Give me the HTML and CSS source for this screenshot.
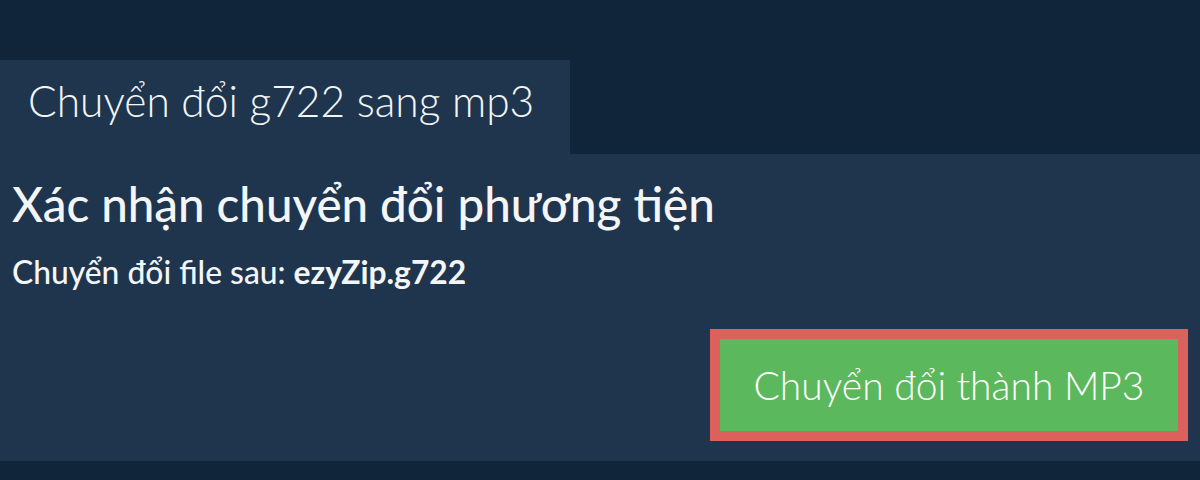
FILE: index.html
```html
<!DOCTYPE html>
<html lang="vi">
<head>
  <meta charset="UTF-8">
  <title>Chuyển đổi g722 sang mp3</title>
  <link rel="stylesheet" href="styles.css">
</head>
<body>
  <div class="page">
    <div class="tab">Chuyển đổi g722 sang mp3</div>
    <div class="panel">
      <h1 class="panel-title">Xác nhận chuyển đổi phương tiện</h1>
      <p class="file-line">Chuyển đổi file sau: <b>ezyZip.g722</b></p>
      <div class="actions">
        <button class="convert-btn">Chuyển đổi thành MP3</button>
      </div>
    </div>
  </div>
</body>
</html>
```

FILE: styles.css
```css
body {
  margin: 0;
  background: #10243a;
  color: #f3f5f7;
  font-family: 'Lato', 'Noto Sans', sans-serif;
}

.page {
  padding-top: 60px;
  height: 420px;
  overflow: hidden;
}

.tab {
  display: inline-block;
  vertical-align: top;
  background: #1f354d;
  height: 94px;
  line-height: 81px;
  padding: 0 36px 0 28px;
  font-size: 42.5px;
  font-weight: 300;
}

.panel {
  background: #1f354d;
  height: 307px;
  padding: 0 12px;
  display: flex;
  flex-direction: column;
}

.panel-title {
  margin: 0;
  padding-top: 22px;
  font-size: 47.5px;
  font-weight: 500;
  line-height: 56px;
}

.file-line {
  margin: 22px 0 0;
  font-size: 31.8px;
  font-weight: 500;
  line-height: 36px;
}

.file-line b {
  font-weight: 700;
}

.actions {
  display: flex;
  justify-content: flex-end;
  margin-top: 39px;
}

.convert-btn {
  background: #5cb85c;
  border: 10px solid #dc605c;
  color: #fff;
  font-family: 'Lato', 'Noto Sans', sans-serif;
  font-size: 39px;
  font-weight: 300;
  width: 478px;
  height: 112px;
  padding: 0;
  cursor: pointer;
}
```
